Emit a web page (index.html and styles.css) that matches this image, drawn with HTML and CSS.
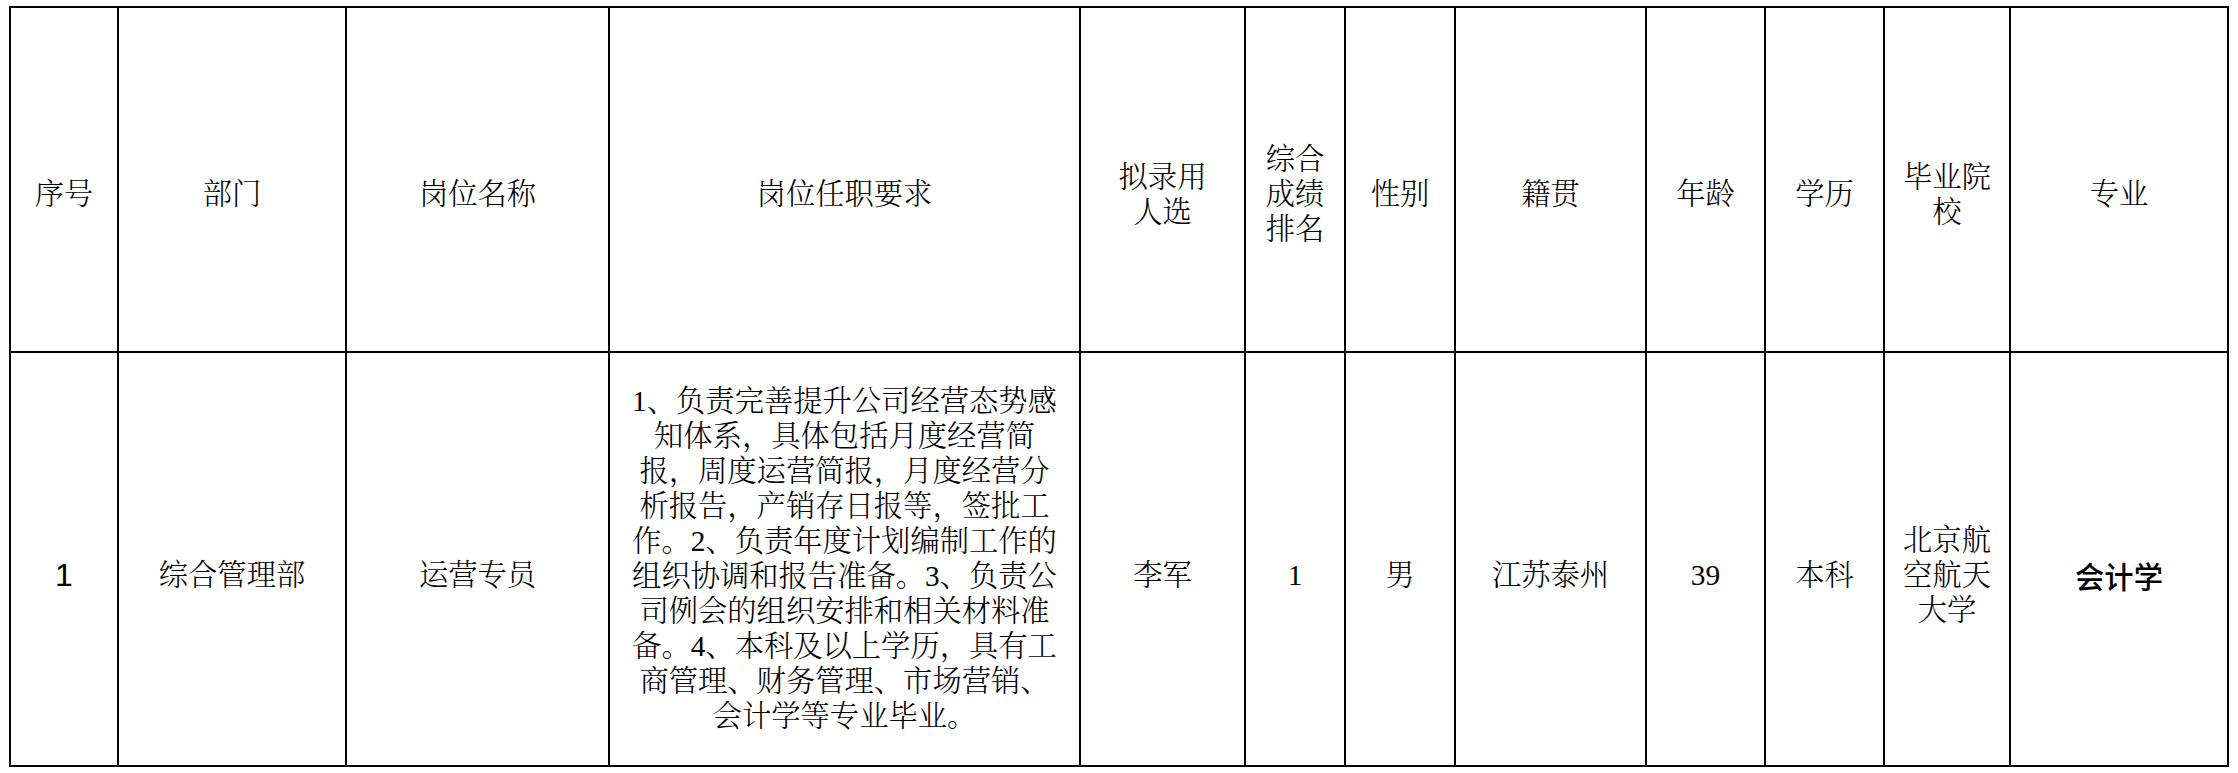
FILE: index.html
```html
<!DOCTYPE html>
<html lang="zh-CN">
<head>
<meta charset="utf-8">
<title>拟录用人选公示</title>
<link rel="stylesheet" href="styles.css">
</head>
<body>
<table class="sheet">
  <colgroup>
    <col class="c-no">
    <col class="c-dept">
    <col class="c-post">
    <col class="c-req">
    <col class="c-name">
    <col class="c-rank">
    <col class="c-sex">
    <col class="c-origin">
    <col class="c-age">
    <col class="c-edu">
    <col class="c-school">
    <col class="c-major">
  </colgroup>
  <thead>
    <tr class="head-row">
      <th>序号</th>
      <th>部门</th>
      <th>岗位名称</th>
      <th>岗位任职要求</th>
      <th>拟录用<br>人选</th>
      <th>综合<br>成绩<br>排名</th>
      <th>性别</th>
      <th>籍贯</th>
      <th>年龄</th>
      <th>学历</th>
      <th>毕业院<br>校</th>
      <th>专业</th>
    </tr>
  </thead>
  <tbody>
    <tr class="body-row">
      <td class="sans-num">1</td>
      <td>综合管理部</td>
      <td>运营专员</td>
      <td class="req">1、负责完善提升公司经营态势感<br>知体系，具体包括月度经营简<br>报，周度运营简报，月度经营分<br>析报告，产销存日报等，签批工<br>作。2、负责年度计划编制工作的<br>组织协调和报告准备。3、负责公<br>司例会的组织安排和相关材料准<br>备。4、本科及以上学历，具有工<br>商管理、财务管理、市场营销、<br>会计学等专业毕业。</td>
      <td>李军</td>
      <td>1</td>
      <td>男</td>
      <td>江苏泰州</td>
      <td>39</td>
      <td>本科</td>
      <td>北京航<br>空航天<br>大学</td>
      <td class="sans-text">会计学</td>
    </tr>
  </tbody>
</table>
</body>
</html>
```

FILE: styles.css
```css
html, body {
  background: #ffffff;
}

body {
  margin: 0;
  padding: 6px 0 0 9px;
  color: #000000;
  font-family: "Liberation Serif", "Noto Serif CJK SC", "Source Han Serif SC", "AR PL UMing CN", "Noto Sans CJK SC", serif;
  font-size: 29.3px;
  line-height: 35px;
  font-weight: 300;
}

.sheet {
  border-collapse: collapse;
  table-layout: fixed;
  width: 2220px;
}

.sheet th,
.sheet td {
  border: 2px solid #000000;
  padding: 0;
  text-align: center;
  vertical-align: middle;
  font-weight: 300;
  white-space: nowrap;
}

.c-no { width: 108px; }
.c-dept { width: 228px; }
.c-post { width: 263px; }
.c-req { width: 471px; }
.c-name { width: 165px; }
.c-rank { width: 100px; }
.c-sex { width: 110px; }
.c-origin { width: 191px; }
.c-age { width: 119px; }
.c-edu { width: 119px; }
.c-school { width: 126px; }
.c-major { width: 218px; }

.head-row {
  height: 345px;
}

.head-row th {
  padding-top: 30px;
}

.body-row {
  height: 414px;
}

.body-row td {
  padding-top: 32px;
}

.body-row td.req {
  padding-top: 0;
}

.sans-num {
  font-family: "Liberation Sans", Arial, sans-serif;
  font-size: 32px;
}

.sans-text {
  font-family: "Noto Sans CJK SC", "Liberation Sans", sans-serif;
  font-weight: 500 !important;
}
```
